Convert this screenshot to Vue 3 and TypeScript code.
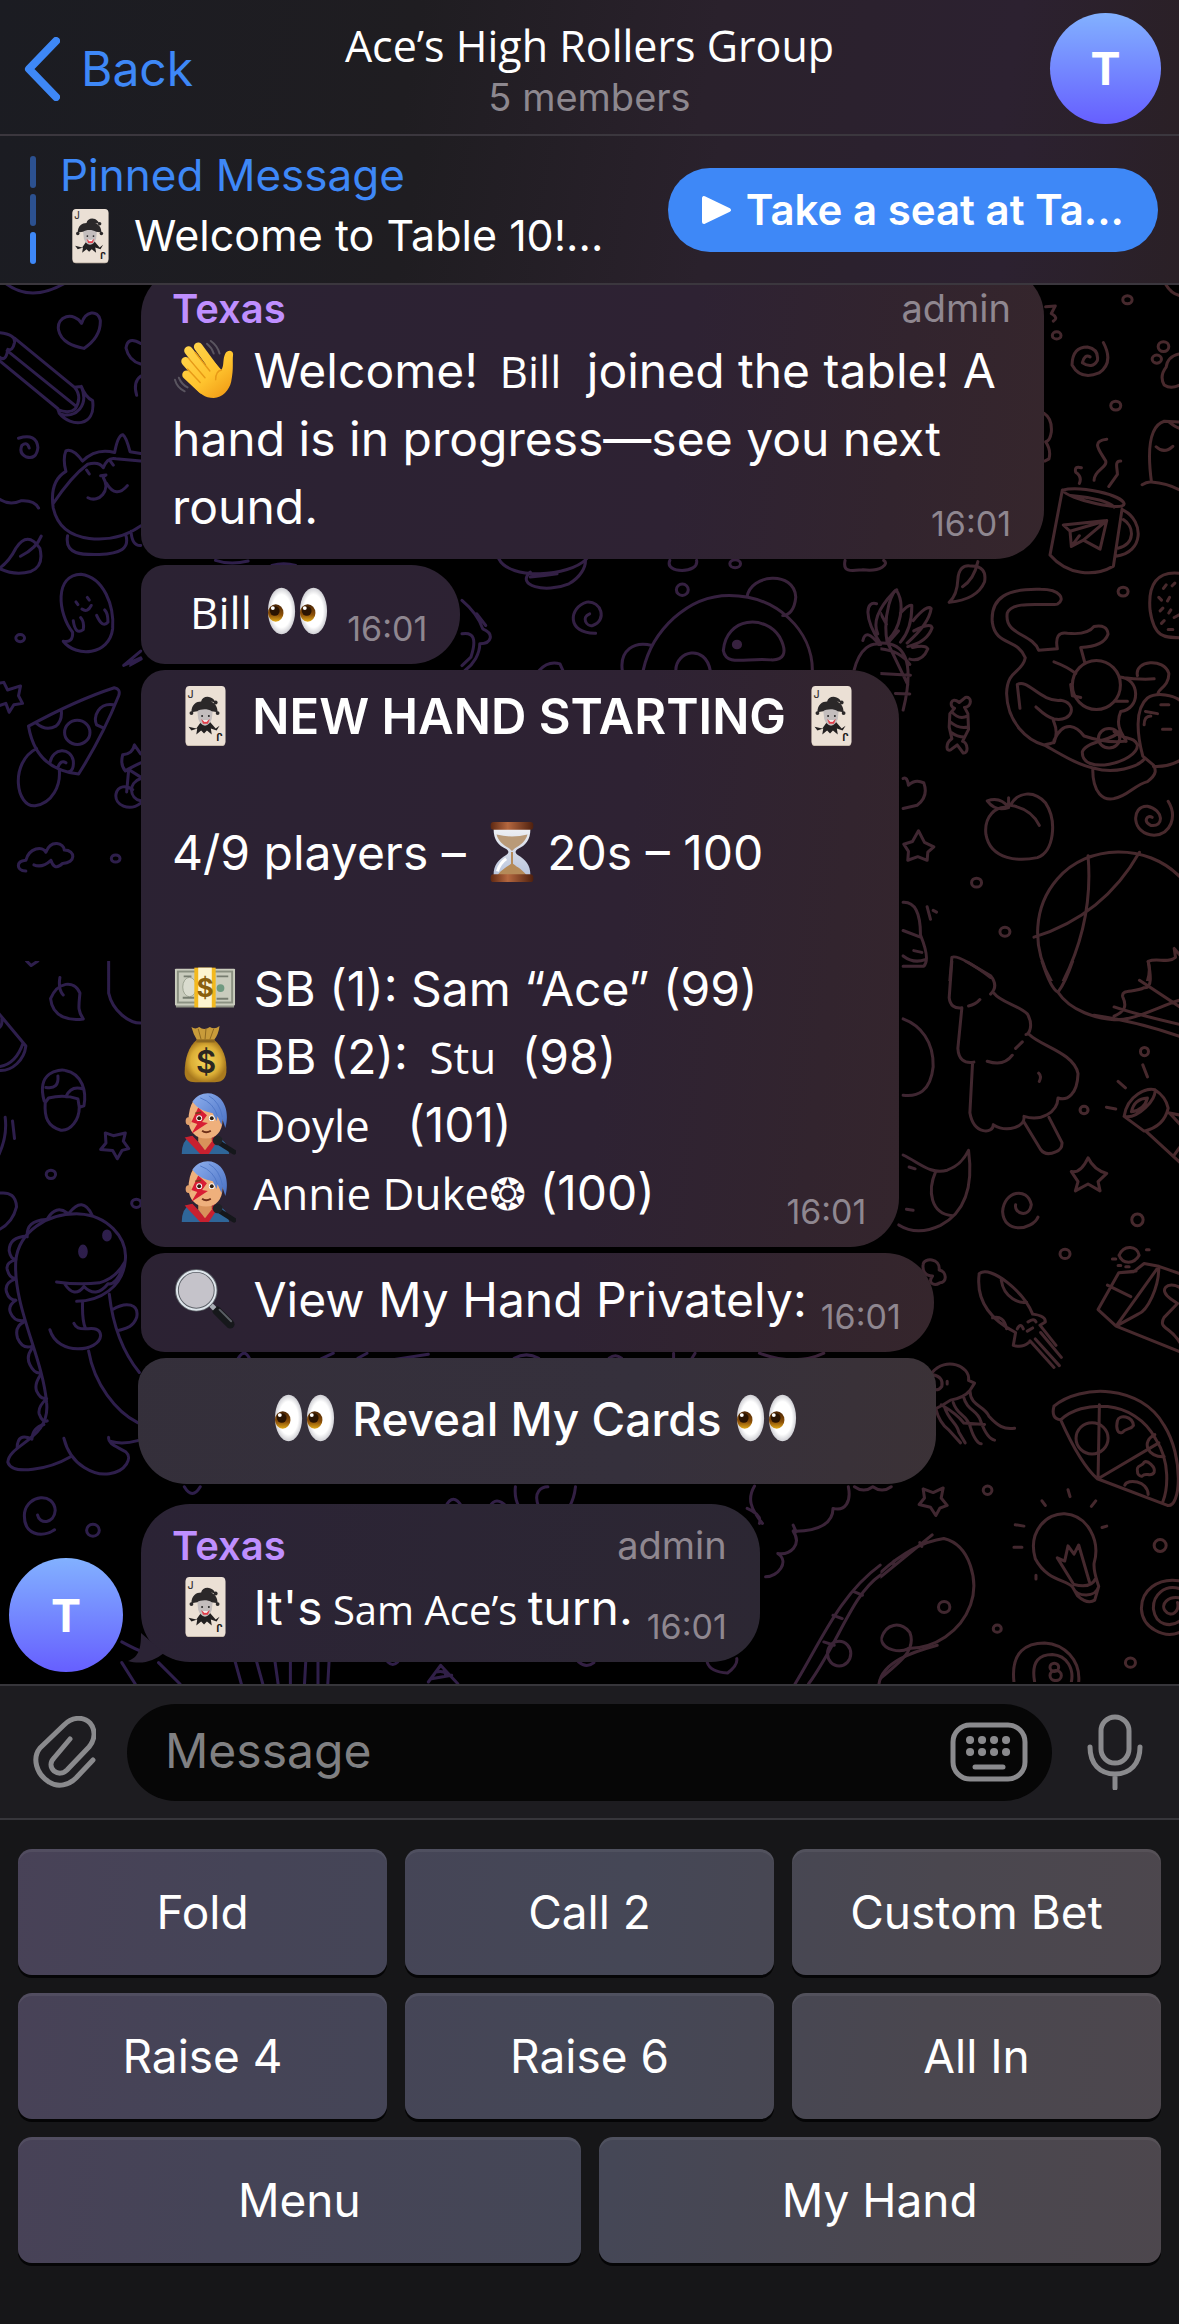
<script setup lang="ts">
import { h, ref, type FunctionalComponent } from 'vue'

type EmojiName = 'joker' | 'wave' | 'eyes' | 'hourglass' | 'cash' | 'bag' | 'singer' | 'magnifier'

const art: Record<EmojiName, string> = {
  joker: `
    <rect x="12" y="2" width="41" height="61" rx="4" fill="#c9bcae" />
    <rect x="12" y="1" width="41" height="61" rx="4" fill="#ebe0d5" />
    <text x="14" y="13" font-size="11" font-weight="500" fill="#3a3636">J</text>
    <text x="14" y="13" font-size="11" font-weight="700" fill="#1e1b1b" transform="rotate(180 32 31.5)">J</text>
    <path d="M23 45l5-7h9l6 7 4-3-3 5-6-2 1 6-5-4-3 3-3-3-5 4 1-6-6 2-3-4z" fill="#232021" />
    <path d="M24 26q8-5 16 0l-1 9q-2 6-7 7-5-1-7-7z" fill="#c3bdbd" />
    <path d="M18 28c0-8 5-11 10-11 1-5 8-7 13-2l2 3-5-1c5 2 7 6 7 11l-6-1c-5-3-12-2-15 0z" fill="#2b2829" />
    <circle cx="18" cy="29" r="2" fill="#2b2829" />
    <circle cx="45" cy="29" r="2" fill="#2b2829" />
    <circle cx="43" cy="18" r="2" fill="#2b2829" />
    <circle cx="29" cy="32" r="1" fill="#222" />
    <circle cx="36" cy="32" r="1" fill="#222" />
    <path d="M28 35q4 5 9 0l-2 5h-5z" fill="#e23e4a" />
    <path d="M30 36q3 1 5 0l-1 2h-3z" fill="#fff" />`,
  wave: `
    <g fill="none" stroke="url(#g-hand)" stroke-width="9" stroke-linecap="round">
      <path d="M25 8l19 26" /><path d="M15 12l21 27" /><path d="M12 23l19 22" /><path d="M13 37l16 15" />
    </g>
    <path d="M27 30L40 22l9 10c3-5 1-11 4-17 2-4 8-4 8 1-1 9 1 13-2 28-2 9-9 16-18 17-9 0-15-5-21-13z" fill="url(#g-hand)" />
    <path d="M22 14l15 19M15 20l17 20M14 31l13 14M49 32q-6 1-6 10" fill="none" stroke="#e89a17" stroke-width="1.5" stroke-linecap="round" />
    <path d="M38 2q7 5 9 13M34 5q5 4 7 10M5 40q3 7 9 10M1 42q2 8 10 12" fill="none" stroke="#5a5560" stroke-width="2" stroke-linecap="round" />`,
  eyes: `
    <ellipse cx="15" cy="32" rx="14" ry="24" fill="url(#g-eye)" />
    <ellipse cx="48" cy="32" rx="14" ry="24" fill="url(#g-eye)" />
    <ellipse cx="9" cy="34" rx="8" ry="9" fill="url(#g-iris)" />
    <ellipse cx="42" cy="34" rx="8" ry="9" fill="url(#g-iris)" />
    <circle cx="8" cy="32" r="5" fill="#2a1402" />
    <circle cx="41" cy="32" r="5" fill="#2a1402" />
    <circle cx="6" cy="29" r="2" fill="#fff" />
    <circle cx="39" cy="29" r="2" fill="#fff" />`,
  hourglass: `
    <path d="M13 8h38c0 12-5 17-13 21-3 2-3 4 0 6 8 5 13 10 13 21H13c0-11 5-16 13-21 3-2 3-4 0-6C18 25 13 20 13 8z" fill="url(#g-glass)" />
    <path d="M16 14q16 4 32 0c-2 7-7 11-13 14l-3 3-3-3c-6-3-11-7-13-14z" fill="#b99a78" />
    <path d="M31 32h2v12c5 4 10 6 14 12H17c4-6 9-8 14-12z" fill="#b58a58" />
    <path d="M17 52q2-8 9-13" stroke="#fff" stroke-width="3" fill="none" />
    <rect x="10" y="1" width="44" height="8" rx="3" fill="url(#g-wood)" />
    <rect x="10" y="55" width="44" height="8" rx="3" fill="url(#g-wood)" />`,
  cash: `
    <path d="M2 48h60v4H2z" fill="#8d9084" />
    <rect x="1" y="12" width="62" height="38" rx="1" fill="#c9ccbd" />
    <rect x="4" y="15" width="56" height="32" fill="none" stroke="#8b9182" stroke-width="2" />
    <ellipse cx="16" cy="31" rx="7" ry="10" fill="#dadccf" stroke="#9da392" stroke-width="1" />
    <circle cx="48" cy="32" r="4" fill="#6f9a80" />
    <path d="M10 20h8M44 20h12M9 42h12M44 43h12" stroke="#777d70" stroke-width="2" />
    <rect x="21" y="11" width="22" height="41" fill="#f3b91f" />
    <rect x="25" y="11" width="14" height="41" fill="#fdf4d0" />
    <text x="32" y="41" text-anchor="middle" font-size="27" font-weight="700" fill="#8a5f0c">$</text>`,
  bag: `
    <path d="M18 2q4 3 8 0 5 4 11 0 5 3 10-1-1 9-6 15H24Q20 10 18 2z" fill="#c89b3a" />
    <path d="M25 4l3 11M33 4l-1 11M41 4l-4 11" stroke="#8c6720" stroke-width="1" />
    <path d="M24 15h17c10 8 14 20 13 34-1 8-6 10-12 10H22c-7 0-11-3-11-10 0-14 4-27 13-34z" fill="url(#g-bag)" />
    <path d="M23 15h19v3H23z" fill="#8c6720" />
    <text x="33" y="50" text-anchor="middle" font-size="32" font-weight="600" fill="#2c2722">$</text>`,
  singer: `
    <path d="M8 63q0-14 9-18l15 11 12-11q11 4 13 18z" fill="#2f6699" />
    <path d="M11 46l8-2 13 14 9-14 6 2-11 17h-9z" fill="#c8202f" />
    <path d="M25 42h14v8l-7 9-7-9z" fill="#d9925a" />
    <path d="M20 8q-5 8-5 20c0 12 8 19 18 19s17-7 17-19L46 8z" fill="#efb07c" />
    <ellipse cx="15" cy="29" rx="3" ry="4" fill="#e0a06c" />
    <path d="M25 15l9 8-5 7 6 1-17 11 6-10-6-2z" fill="#d81e34" />
    <circle cx="26" cy="26" r="3" fill="#fff" />
    <circle cx="26" cy="26" r="2" fill="#332010" />
    <circle cx="39" cy="26" r="3" fill="#fff" />
    <circle cx="39" cy="26" r="2" fill="#332010" />
    <path d="M22 21l6-1" stroke="#7a3b1c" stroke-width="2" />
    <path d="M29 39q4 3 9 0" stroke="#6e2f18" stroke-width="2" fill="none" />
    <path d="M19 9C26-2 41-2 48 6c7 8 8 19 5 30l-3-9-1 6-4-9-1 5-4-8C32 19 24 16 19 9z" fill="url(#g-hair)" />
    <path d="M27 5q14 5 18 19M36 3q11 6 14 22" stroke="#5078c8" stroke-width="1" fill="none" />
    <path d="M46 51l16 10" stroke="#15171b" stroke-width="5" stroke-linecap="round" />
    <circle cx="45" cy="49" r="5" fill="#1f2226" />`,
  magnifier: `
    <path d="M44 44l14 14" stroke="#16181b" stroke-width="9" stroke-linecap="round" />
    <path d="M47 43l12 12" stroke="#5a5e64" stroke-width="2" stroke-linecap="round" />
    <path d="M37 37l5 5" stroke="#a8adb4" stroke-width="5" />
    <circle cx="23" cy="23" r="20" fill="#c5c3ca" stroke="#5d6168" stroke-width="4" />
    <circle cx="23" cy="23" r="20" fill="none" stroke="#dfe6ec" stroke-width="2" />`,
}

const Emoji: FunctionalComponent<{ name: EmojiName }> = (props) =>
  h('svg', { class: 'emoji', viewBox: '0 0 64 64', innerHTML: art[props.name] })
Emoji.props = ['name']

const draft = ref('')

const keyRows: string[][] = [
  ['Fold', 'Call 2', 'Custom Bet'],
  ['Raise 4', 'Raise 6', 'All In'],
  ['Menu', 'My Hand'],
]
</script>

<template>
  <div class="app">
    <svg class="gradients" aria-hidden="true">
      <defs>
        <linearGradient id="g-hand" gradientUnits="userSpaceOnUse" x1="10" y1="5" x2="55" y2="60">
          <stop offset="0" stop-color="#ffd54e" />
          <stop offset="0.6" stop-color="#ffc42e" />
          <stop offset="1" stop-color="#f09a15" />
        </linearGradient>
        <radialGradient id="g-eye">
          <stop offset="0.7" stop-color="#ffffff" />
          <stop offset="1" stop-color="#cfcfd4" />
        </radialGradient>
        <linearGradient id="g-iris" x1="0" y1="0" x2="0" y2="1">
          <stop offset="0" stop-color="#4a2405" />
          <stop offset="0.6" stop-color="#8a4f08" />
          <stop offset="1" stop-color="#e0a818" />
        </linearGradient>
        <linearGradient id="g-wood" x1="0" y1="0" x2="1" y2="0">
          <stop offset="0" stop-color="#5e2812" />
          <stop offset="0.4" stop-color="#b4673f" />
          <stop offset="1" stop-color="#4e200e" />
        </linearGradient>
        <linearGradient id="g-glass" x1="0" y1="0" x2="0" y2="1">
          <stop offset="0" stop-color="#eef0f4" />
          <stop offset="1" stop-color="#b9c4dc" />
        </linearGradient>
        <radialGradient id="g-bag">
          <stop offset="0" stop-color="#f6d75c" />
          <stop offset="0.7" stop-color="#dcae36" />
          <stop offset="1" stop-color="#a97a1e" />
        </radialGradient>
        <linearGradient id="g-hair" x1="0" y1="0" x2="1" y2="1">
          <stop offset="0" stop-color="#8fb0ee" />
          <stop offset="1" stop-color="#4870c4" />
        </linearGradient>
      </defs>
    </svg>

    <header class="topbar">
      <a class="back" href="#">
        <svg class="chevron" viewBox="0 0 36 64" aria-hidden="true"><path d="M32 4L5 32l27 28" /></svg>
        <span>Back</span>
      </a>
      <div class="heading">
        <h1>Ace’s High Rollers Group</h1>
        <p>5 members</p>
      </div>
      <div class="avatar">T</div>
    </header>

    <section class="pinned">
      <div class="marks"><i></i><i></i><i class="on"></i></div>
      <div class="pinned-text">
        <strong>Pinned Message</strong>
        <p><Emoji name="joker" /> Welcome to Table 10!...</p>
      </div>
      <button class="seat" type="button">
        <svg viewBox="0 0 32 32" aria-hidden="true"><path d="M4 4v24l25-12z" /></svg>
        <span>Take a seat at Ta...</span>
      </button>
    </section>

    <main class="chat">
      <svg class="wallpaper" viewBox="0 285 1179 1397" preserveAspectRatio="xMidYMin slice" aria-hidden="true">
        <defs>
          <linearGradient id="g-ink" x1="0" y1="0" x2="1" y2="0">
            <stop offset="0" stop-color="#2d1e4c" />
            <stop offset="0.3" stop-color="#2f1f4a" />
            <stop offset="0.6" stop-color="#352040" />
            <stop offset="0.8" stop-color="#40272f" />
            <stop offset="1" stop-color="#48292c" />
          </linearGradient>
          <mask id="m-ink" maskUnits="userSpaceOnUse" x="0" y="285" width="1179" height="1397">
            <g class="ink">
              <svg x="0" y="280" width="150" height="700" viewBox="0 0 450 1568" preserveAspectRatio="none">
                <path d="M20 8Q95 50 195 8M247 97C225 70 170 80 178 112 185 140 225 148 254 153 280 140 305 120 303 90 295 65 258 70 247 97z" />
                <path d="M0 118Q50 122 46 140 40 160 26 155 20 185 0 172M46 130L226 240 246 238Q258 262 280 270C290 330 215 330 180 298L176 288 0 180M24 158L230 282M226 240Q250 262 228 288 210 300 176 290M246 238C270 280 230 310 185 300" />
                <path d="M58 354Q112 342 116 375 112 402 82 396 58 388 68 370 84 360 90 376M0 490Q30 505 65 494 105 492 118 510" />
                <path d="M0 645Q30 630 50 600 85 560 122 600 135 640 95 652 45 662 0 645M64 618Q112 600 126 573" />
                <path d="M424 142Q385 125 380 152 388 180 424 188M424 215Q400 228 412 258" />
                <path d="M424 388L392 384Q380 350 370 346 355 348 346 386 290 375 250 405 220 375 200 382 190 400 200 428 150 450 162 510 180 570 270 578 360 585 424 550M162 500Q215 440 265 412 300 405 312 420 325 395 350 400L424 405M205 572C195 615 250 615 300 614 365 612 390 600 380 572M395 562Q398 595 424 594M262 425L270 434M332 404L342 414M304 438L320 436Q312 440 312 442C335 470 300 500 266 487M322 455Q350 490 384 460" />
                <path d="M192 808Q222 812 220 788C175 745 165 660 245 658 315 665 345 730 340 780 330 840 230 845 192 808M222 762Q228 795 252 782 256 765 244 755M292 750Q310 780 326 765 326 745 316 738M230 720L236 726M264 710L270 716M248 736Q265 745 276 728M373 862L424 830M373 862L424 845" />
                <ellipse cx="63" cy="801" rx="13" ry="8" /><ellipse cx="349" cy="1294" rx="13" ry="8" />
                <path d="M0 902L14 900 25 917 64 908 58 930 70 947 44 950 30 967 20 947 0 952" />
                <path d="M88 998Q230 940 345 912 365 915 358 930 310 1020 238 1105 110 1095 88 998M112 992Q140 1010 170 998 190 985 186 962M342 950C300 945 280 975 292 995L312 1002M152 1080C160 1045 215 1045 222 1075Q225 1098 208 1100M176 1090Q185 1072 200 1080M112 1048C30 1080 50 1180 108 1176 160 1170 185 1130 180 1095" />
                <ellipse cx="234" cy="1012" rx="38" ry="27" />
                <path d="M424 1060L405 1040Q400 1060 370 1062 362 1085 378 1098 395 1090 424 1080M388 1095L424 1112M388 1095L382 1145M424 1115C385 1125 390 1160 424 1165M424 1170C390 1190 345 1175 350 1150 355 1130 382 1130 400 1140" />
                <path d="M80 1322C50 1320 50 1300 80 1298 90 1270 130 1265 140 1280 155 1250 195 1260 195 1275 230 1275 230 1305 190 1305 170 1320 160 1310 155 1298 130 1315 110 1310 104 1308 95 1325 80 1322M80 1322L30 1460 98 1535 284 1390Q265 1335 222 1300M30 1460L175 1318M50 1480L240 1328M424 1426C350 1430 325 1470 328 1510V1568M328 1510L348 1495M328 1528L344 1545" />
              </svg>
              <svg x="0" y="960" width="150" height="720" viewBox="0 0 450 1568" preserveAspectRatio="none">
                <path d="M328 0V70C340 110 390 135 424 135M82 0L96 10 116 0M252 126C215 130 160 125 154 82 175 45 225 40 242 70 238 100 235 108 252 126M182 36Q176 62 192 74" />
                <path d="M0 115L80 185C75 215 40 240 0 238M72 178Q50 225 0 230M0 145Q10 140 8 126" />
                <path d="M135 305C110 240 180 235 198 238 250 245 262 285 254 315L240 318C240 345 215 370 185 368 145 360 135 340 138 308L148 298Q195 290 236 300L240 318M140 275Q180 280 176 250M200 295Q215 270 250 278" />
                <path d="M318 374L342 380 378 374 372 392 388 408 368 412 354 430 340 412 304 410 320 396zM18 340Q25 380 0 420M40 348L46 386M0 505Q50 500 52 535 40 570 0 584" />
                <ellipse cx="155" cy="464" rx="14" ry="9" /><ellipse cx="411" cy="527" rx="14" ry="9" /><ellipse cx="281" cy="1238" rx="19" ry="13" />
                <path d="M50 650C60 590 140 548 240 550 320 552 385 600 378 650 372 710 300 740 232 740M172 698Q240 705 300 700 350 690 376 655M196 702Q225 735 254 708 290 735 326 702Q350 705 370 668M50 650C40 750 130 860 142 960 155 1040 30 1050 26 1090 40 1120 150 1105 214 1078M250 742Q248 780 258 798M152 802C175 860 300 850 304 815 302 795 275 800 258 800 240 800 230 798 224 788M330 725C340 790 370 850 420 895M268 848C285 920 350 980 415 1004M340 758C380 740 420 745 412 775 400 800 370 800 356 804M194 1038C215 1100 290 1120 330 1115 380 1110 400 1080 380 1068 350 1055 325 1050 328 1036M335 1045Q370 1052 415 1043" />
                <path d="M84 600Q80 565 140 562M145 560Q170 530 204 548M210 548Q250 510 278 552M84 598Q30 600 30 630 35 650 50 648M50 650Q20 655 24 670 30 690 48 690M48 692Q15 700 22 720 30 738 50 738M50 738Q25 750 34 765 45 785 75 782M75 785Q45 795 55 820 70 845 98 838M98 843Q80 860 92 878 105 898 124 896M124 900Q105 920 112 935 125 955 140 950M142 952Q115 970 120 985 130 1005 144 1000M134 1008Q100 1015 98 1040M98 1040Q55 1025 54 1058" />
                <ellipse cx="251" cy="632" rx="10" ry="12" class="dot" /><ellipse cx="323" cy="597" rx="10" ry="10" class="dot" />
                <path d="M166 1237C130 1255 70 1250 76 1200 85 1160 165 1155 168 1195 165 1225 120 1225 115 1205 116 1195 124 1194M0 1325Q20 1310 46 1325 70 1318 104 1318M0 1335Q20 1350 30 1370M424 1278Q410 1290 404 1325 370 1325 368 1345 380 1360 404 1345 396 1370 424 1372M360 1445L424 1475M375 1490L424 1480M358 1460Q360 1500 380 1530L420 1568M0 1502Q25 1510 24 1525 10 1535 0 1528M120 1540L140 1555 168 1560" />
              </svg>
              <svg x="880" y="280" width="299" height="700" viewBox="0 0 897 1568" preserveAspectRatio="none">
                <ellipse cx="740" cy="44" rx="14" ry="9" /><ellipse cx="528" cy="124" rx="13" ry="8" /><ellipse cx="705" cy="281" rx="15" ry="10" /><ellipse cx="727" cy="697" rx="15" ry="10" /><ellipse cx="288" cy="1348" rx="15" ry="10" /><ellipse cx="373" cy="1458" rx="15" ry="10" />
                <path d="M855 10Q870 30 897 35M495 60L524 58 512 75Q535 85 518 92M668 140Q700 185 655 208 600 225 574 190 575 150 620 150 655 155 650 180 635 200 605 185 612 165 628 172" />
                <ellipse cx="848" cy="149" rx="16" ry="11" /><ellipse cx="828" cy="177" rx="14" ry="9" />
                <path d="M897 165Q860 170 856 195 835 215 850 235 870 245 897 235M490 298Q515 310 512 340 508 360 495 362 512 380 505 400L492 405M784 458Q800 450 812 452 790 330 850 316L897 318M812 452Q860 455 897 470M826 373Q850 390 876 372M865 318Q885 330 897 332" />
                <path d="M545 470C600 460 720 480 730 500 735 520 560 490 545 470L508 615C560 660 640 665 698 640L724 512M570 482Q680 490 700 508M730 516C790 540 790 610 705 618M728 536C760 550 765 590 712 600M548 548L678 538 658 602 608 582 572 596 568 562zM568 562L678 538 608 582M572 596L596 572M678 356C630 360 655 380 675 405 680 420 640 425 640 448M720 405C700 405 710 420 710 435L684 462M602 420Q580 415 585 430 605 440 596 455" />
                <path d="M206 721Q230 705 232 670 235 635 272 640 320 640 312 675 290 715 206 721M246 686Q280 670 292 630M0 745L18 770M20 810C5 745 40 690 48 694 75 725 60 780 22 806M60 745Q85 725 94 728 95 780 60 810M98 762Q140 725 152 735 145 770 80 812M100 785Q150 765 155 778 140 810 82 820M96 822Q135 815 142 825 125 855 88 848M22 812L54 785M0 812C70 810 105 850 68 962M0 825Q60 830 88 860M0 880L90 884M22 812L82 905M45 925L88 926" />
                <path d="M236 945C210 930 205 955 222 958L208 970 206 1000 214 1026C195 1035 195 1058 212 1050L230 1040 248 1058C265 1060 262 1035 246 1032L264 1005 262 970 252 956C275 955 275 930 254 934zM214 966Q235 985 262 975M208 988Q235 1005 262 1000M212 1012Q230 1022 252 1022M68 1115Q80 1110 84 1130 105 1115 130 1125 145 1155 110 1175L68 1182" />
                <path d="M70 1262L96 1256 114 1232 132 1258 160 1268 142 1280 140 1298 112 1290 82 1298 84 1278zM384 1180Q360 1155 320 1165 345 1190 384 1180zM384 1158V1180C345 1175 310 1200 316 1240 330 1300 420 1300 470 1292 520 1280 530 1210 495 1170 460 1140 410 1145 390 1175 430 1180 460 1195 476 1220" />
                <path d="M68 1392Q120 1390 120 1465 150 1520 130 1535H68M68 1455L120 1470M68 1512Q100 1530 134 1520M100 1500L124 1504M140 1402L150 1430M158 1410L168 1414M208 1568L214 1515Q235 1508 330 1560" />
                <path d="M474 828L530 825Q520 785 560 790 620 795 640 775 680 770 682 792 670 820 600 822L612 855M474 828C455 790 370 795 380 745 395 715 500 730 530 725 555 715 540 692 480 692 380 690 330 710 335 765 345 820 410 800 434 845 425 880 380 870 378 925 380 990 440 1030 490 1040 540 1060 590 1085 640 1092 700 1105 770 1090 790 1072M418 958L410 905C440 890 480 945 540 940 590 945 580 990 520 982 490 975 475 960 466 955M520 1035C540 1000 510 985 520 982M490 1040Q530 1035 520 1030C550 980 590 1000 610 1020 650 1030 690 1035 730 1032M520 854Q560 865 585 880M605 1055C620 1030 700 1030 715 1010M605 1055C600 1110 770 1080 770 1040 760 1020 730 1030 700 1010M636 1092C635 1150 670 1165 700 1160 740 1155 760 1130 800 1122 830 1105 825 1095 818 1085L786 1065C770 1020 760 960 800 935 830 920 880 930 897 940M818 1088Q860 1090 897 1075M770 885C760 850 850 845 864 880 865 910 830 915 832 925M716 888Q780 895 820 892M716 888C780 890 780 960 720 965 700 1000 730 1020 736 1032M705 942H740" />
                <ellipse cx="647" cy="906" rx="72" ry="55" /><ellipse cx="685" cy="1025" rx="32" ry="22" />
                <path d="M570 905L575 930 600 934M794 965L830 970M790 995Q790 975 810 975M840 950H864M845 1005H870M862 1166C890 1200 870 1240 820 1242 750 1240 750 1175 800 1177 850 1185 850 1225 810 1220 785 1210 800 1195 814 1202" />
                <path d="M897 656C830 650 800 680 808 740 820 800 850 800 897 800M848 690L856 682M834 710L842 716M874 684L882 678M860 718L866 710M838 740L846 734M864 745L870 738M842 768L850 762M880 755L897 748M862 782H876" />
                <path d="M897 1335C800 1260 620 1260 530 1340 460 1400 450 1490 512 1568M622 1288C635 1400 600 1490 548 1568M776 1280C700 1380 590 1440 460 1470M800 1568Q810 1545 802 1524C830 1515 860 1530 884 1515L880 1495 897 1510" />
              </svg>
              <svg x="880" y="960" width="299" height="720" viewBox="0 0 897 1568" preserveAspectRatio="none">
                <path d="M214 0L206 80Q210 105 244 102M255 0L330 32Q355 55 330 72M264 98Q285 95 298 84M340 70C360 90 410 95 440 115 460 140 445 160 436 160M244 102L232 190Q235 225 280 220M320 218Q370 230 395 205M405 190L425 176M446 160C480 185 580 200 592 245 590 290 560 305 532 298 530 330 480 350 430 338 435 360 380 375 338 356 340 375 280 380 268 330L276 222M430 350L480 410Q495 425 525 415 545 410 544 395L505 340M474 244Q484 250 476 262" />
                <path d="M68 126C120 140 160 175 158 230 150 285 110 296 68 292M68 422C120 440 150 465 200 455 240 445 255 425 264 412 275 470 270 540 180 575 130 592 90 590 55 574M166 457C140 500 150 550 216 554M86 448L104 452M78 540L98 542" />
                <path d="M484 0Q510 60 532 68 555 45 576 0M532 68C570 110 650 125 700 128 760 130 830 100 897 85M700 100Q760 115 897 138M640 118Q760 130 897 164M802 0C810 30 815 60 790 58 760 70 720 60 726 78 740 100 730 110 700 120M776 42L897 100" />
                <ellipse cx="791" cy="197" rx="12" ry="9" /><ellipse cx="610" cy="324" rx="12" ry="8" /><ellipse cx="770" cy="563" rx="17" ry="13" /><ellipse cx="553" cy="637" rx="15" ry="10" /><ellipse cx="321" cy="1151" rx="13" ry="9" /><ellipse cx="838" cy="1271" rx="18" ry="13" /><ellipse cx="191" cy="1405" rx="17" ry="12" /><ellipse cx="350" cy="1452" rx="12" ry="8" /><ellipse cx="749" cy="1526" rx="15" ry="10" />
                <path d="M786 226L800 252M712 262L734 276M677 318L705 322M730 338C740 290 800 275 822 280 830 300 770 345 730 338zM822 280Q855 295 862 320 850 360 790 370L730 338M795 370L897 438M862 330L897 335M868 332L897 355M880 422L897 405M752 328Q760 300 800 298 790 325 752 328" />
                <path d="M572 458Q600 462 622 428 640 455 678 462L652 480 658 500 622 485 584 500 592 480zM472 557C455 585 370 595 366 545 370 500 440 490 452 530 445 560 400 550 405 530 415 525 424 530" />
                <path d="M296 680C330 660 430 720 456 768 480 770 495 775 494 785L478 792M296 680C285 740 330 780 405 808L398 836Q425 842 444 830M362 694C370 735 420 745 438 742M336 776Q370 770 378 800M410 800Q420 785 428 800M440 805L456 798M442 785Q460 775 466 785M478 792L526 836M480 808L542 862M464 822L536 880M448 826L520 884" />
                <path d="M715 640C730 615 770 620 775 640 760 660 725 660 715 640M714 678L652 758 706 794 772 768C800 760 835 710 834 664L790 658 758 676zM714 678L766 674M680 705L750 730M706 794L834 664M897 680L834 664M706 794L897 850M897 710C860 695 830 715 870 735L890 745 850 775C830 800 870 795 897 830M695 648H705M712 662H720M735 665H745M797 628H805" />
                <path d="M155 895C195 860 270 880 264 912L282 918 268 934Q250 950 210 955 190 965 162 975M158 900Q190 905 184 925 175 935 158 932M200 914V920M268 934C270 970 310 965 325 990 350 1010 370 1020 402 1016M248 946C260 980 290 975 300 1000 310 1020 325 1040 342 1042M218 960C230 990 260 985 270 1015 280 1040 295 1050 302 1050M192 970C205 1000 230 1005 235 1025L254 1048M165 972C175 1000 195 1015 205 1020L240 1048M182 965Q230 985 250 1005L312 1008" />
                <path d="M520 968C600 920 780 920 850 1010 910 1080 900 1190 860 1184L650 1126Q600 1095 540 998 510 995 520 968M540 998C600 955 760 950 825 1040 870 1090 860 1150 846 1176M656 965L652 1126 834 1048M822 1030C780 1045 800 1080 850 1078M732 1140C740 1125 800 1130 802 1160" />
                <ellipse cx="634" cy="1038" rx="48" ry="34" />
                <path d="M710 1000C715 985 755 990 758 1010 750 1020 735 1015 725 1025 710 1030 705 1015 710 1000zM770 1110C765 1095 785 1100 790 1090 800 1085 825 1100 820 1112 810 1125 795 1110 785 1120 775 1122 770 1115 770 1110z" />
                <path d="M116 1182L132 1168 128 1148 158 1156 188 1146 182 1168 200 1184 178 1190 166 1206 150 1188zM0 1340L155 1248M0 1330Q100 1265 190 1256M40 1305V1315M118 1265L124 1273M190 1256C270 1270 295 1350 270 1400 240 1460 160 1495 84 1495" />
                <path d="M84 1495C60 1505 10 1500 2 1475 15 1440 60 1435 88 1460 110 1500 50 1530 0 1560" />
                <path d="M576 1362C560 1345 500 1350 464 1300 440 1240 500 1200 552 1202 620 1205 660 1260 640 1310 638 1330 650 1350 654 1360 645 1385 590 1385 576 1362zM576 1362L590 1380Q620 1400 642 1390L654 1360M580 1356Q630 1365 644 1344M576 1352L530 1298 552 1305 562 1272 580 1290 594 1270 626 1350M562 1150L568 1165M484 1174L494 1184M645 1174L632 1186M404 1226L430 1229M664 1232L678 1229M400 1275H424M466 1336V1344" />
                <path d="M897 1348C830 1340 780 1370 782 1410 785 1450 850 1475 897 1460M897 1365C850 1355 815 1380 818 1410 825 1445 870 1450 897 1435M897 1385C860 1380 840 1400 852 1412 870 1430 897 1415 890 1395" />
                <path d="M400 1568C390 1500 440 1483 492 1483 550 1485 600 1520 594 1568M462 1568C450 1520 480 1508 515 1508 560 1510 580 1540 572 1568" />
                <ellipse cx="521" cy="1536" rx="13" ry="9" /><ellipse cx="525" cy="1554" rx="17" ry="11" />
                <path d="M128 660C130 645 180 645 176 672 200 675 200 700 178 700 160 708 140 700 156 685 135 685 125 675 128 660z" />
              </svg>
              <svg x="130" y="280" width="930" height="390" viewBox="0 0 1568 1170" preserveAspectRatio="none">
                <path d="M622 835C640 900 740 890 770 835M675 875C650 915 700 940 740 910 760 890 768 860 768 840M675 890Q700 885 720 880M910 840C900 880 960 880 955 840M1205 840C1200 880 1220 870 1235 868 1265 875 1280 850 1270 840" />
                <ellipse cx="1020" cy="850" rx="9" ry="12" /><ellipse cx="931" cy="928" rx="10" ry="17" />
                <path d="M775 1000C760 1010 770 1040 780 1035 805 1020 795 960 770 965 740 980 735 1060 785 1058" />
                <path d="M865 1170C880 1050 940 945 1010 945 1090 945 1150 1050 1150 1170M1040 950C1045 880 1120 870 1122 950 1120 990 1110 1005 1100 1005M830 1170C825 1110 850 1080 880 1095M920 1170C920 1110 970 1090 978 1170M1000 1110C1005 1010 1070 1000 1095 1070 1110 1120 1100 1140 1080 1138 1040 1130 1005 1160 1000 1110" />
                <ellipse cx="1023" cy="1092" rx="6" ry="10" class="dot" />
                <path d="M560 960C580 990 590 1020 595 1045 615 1060 610 1090 590 1090 590 1120 580 1150 565 1170M560 1060Q590 1050 575 1130L560 1155M585 1000L600 1035M690 1170Q705 1140 725 1150L730 1170" />
                <path d="M0 1155L20 1135M145 840Q170 855 200 842M240 855Q260 845 280 855" />
                <path d="M1265 1090C1235 1010 1240 960 1258 970M1260 1060C1245 1000 1290 930 1292 928M1235 1080Q1240 1040 1262 1092M1220 1170C1230 1100 1250 1085 1265 1092" />
              </svg>
              <svg x="0" y="1240" width="960" height="450" viewBox="0 0 1568 1350" preserveAspectRatio="none">
                <path d="M390 350Q400 320 408 350M525 352L545 335M585 350L600 335M640 355L700 338M840 350Q860 330 880 350M995 350Q1005 335 1015 350M1100 350V335M1130 350L1135 335M1240 335Q1300 375 1345 335M302 735Q315 775 328 735M728 795Q740 750 755 795M800 795Q810 760 828 795M842 735Q840 770 848 795M940 735Q938 770 930 795M880 795C870 750 885 735 895 735" />
                <path d="M1232 733C1220 770 1225 800 1245 845M1385 735C1390 780 1380 810 1360 800 1360 840 1340 870 1295 868 1310 910 1290 940 1270 935 1290 960 1270 1005 1250 1005M1220 800Q1245 820 1240 845M1295 850L1300 870M1395 735Q1410 755 1425 735 1440 755 1455 735" />
                <path d="M1298 1326C1340 1200 1370 1060 1437 970M1320 1326C1370 1200 1390 1060 1437 1000M1435 1326C1440 1260 1490 1230 1530 1210M1345 1200L1362 1210M1395 1050L1408 1060M1360 1120L1375 1130" />
                <ellipse cx="1370" cy="1235" rx="19" ry="37" />
                <path d="M1155 1262Q1160 1290 1188 1293 1205 1270 1203 1250M945 1260Q958 1280 970 1262M634 1260Q642 1275 650 1260M700 1320L720 1270 748 1325M705 1310L738 1300M712 1290Q730 1285 728 1300M385 1260L395 1326M420 1260L430 1326M450 1260L455 1326M475 1260V1326M500 1260L498 1326M520 1260V1326M538 1260L536 1326M200 1262L222 1326M260 1262L295 1326M200 1200Q225 1225 235 1230" />
              </svg>
            </g>
          </mask>
        </defs>
        <rect x="0" y="285" width="1179" height="1397" fill="url(#g-ink)" mask="url(#m-ink)" />
      </svg>

      <div class="stack">
        <article class="bubble wide">
          <div class="sender"><b>Texas</b><span>admin</span></div>
          <div class="line"><Emoji name="wave" /> Welcome! <span class="name spaced">Bill</span> joined the table! A</div>
          <div class="line">hand is in progress—see you next</div>
          <div class="line last"><span>round.</span><time>16:01</time></div>
        </article>

        <article class="bubble">
          <div class="line last">
            <span><span class="name indent">Bill</span> <Emoji name="eyes" /></span><time>16:01</time>
          </div>
        </article>

        <article class="bubble">
          <div class="line title"><Emoji name="joker" /> NEW HAND STARTING <Emoji name="joker" /></div>
          <div class="line"></div>
          <div class="line">4/9 players – <Emoji name="hourglass" />20s – 100</div>
          <div class="line"></div>
          <div class="line"><Emoji name="cash" /> SB (1): Sam “Ace” (99)</div>
          <div class="line"><Emoji name="bag" /> BB (2): <span class="name spaced">Stu</span> (98)</div>
          <div class="line"><Emoji name="singer" /> <span class="name trail">Doyle</span> (101)</div>
          <div class="line last">
            <span><Emoji name="singer" /> <span class="name">Annie Duke<span class="badge">❂</span></span> (100)</span><time>16:01</time>
          </div>
        </article>

        <div class="offer">
          <article class="bubble">
            <div class="line last">
              <span><Emoji name="magnifier" /> View My Hand Privately:</span><time>16:01</time>
            </div>
          </article>
          <button class="reveal" type="button">
            <Emoji name="eyes" /> Reveal My Cards <Emoji name="eyes" />
          </button>
        </div>
      </div>

      <div class="turn">
        <div class="avatar big">T</div>
        <article class="bubble tailed">
          <svg class="tail" viewBox="0 0 36 30" aria-hidden="true"><path d="M13 0c0 16-2 24-13 28 14 4 26 0 36-8z" /></svg>
          <div class="sender"><b>Texas</b><span>admin</span></div>
          <div class="line last">
            <span><Emoji name="joker" /> It's<span class="name small"> Sam Ace’s </span>turn.</span><time>16:01</time>
          </div>
        </article>
      </div>
    </main>

    <form class="compose" @submit.prevent>
      <button class="icon" type="button" aria-label="Attach">
        <svg viewBox="0 0 64 72"><path d="M61 44L44 62C37 69 26 72 17 66 4 58 0 42 8 32L32 9c8-8 19-9 26-2 6 7 5 17-1 24L35 54c-4 4-9 4-13 1-4-4-4-9 0-13l16-19" /></svg>
      </button>
      <div class="field">
        <input v-model="draft" type="text" placeholder="Message" aria-label="Message" />
        <button class="icon" type="button" aria-label="Bot keyboard">
          <svg class="kb" viewBox="0 0 78 60">
            <rect x="3" y="3" width="72" height="54" rx="17" />
            <path class="dots" d="M20 18h.1M32 18h.1M44 18h.1M56 18h.1M20 30h.1M32 30h.1M44 30h.1M56 30h.1" />
            <path d="M25 45h28" />
          </svg>
        </button>
      </div>
      <button class="icon" type="button" aria-label="Record voice">
        <svg class="mic" viewBox="0 0 56 76">
          <rect x="14" y="3" width="28" height="46" rx="14" />
          <path d="M3 33c0 17 10 27 25 27s25-10 25-27M28 60v14" />
        </svg>
      </button>
    </form>

    <section class="keyboard">
      <div v-for="(row, i) in keyRows" :key="i" class="key-row">
        <button v-for="label in row" :key="label" class="key" type="button">{{ label }}</button>
      </div>
    </section>
  </div>
</template>

<style>
html,
body {
  background: #161618;
}
</style>

<style scoped>
.app {
  display: flex;
  flex-direction: column;
  min-height: 100vh;
  background: #161618;
  color: #fff;
  font-family: Inter, 'Liberation Sans', sans-serif;
  font-size: 48px;
}

.gradients {
  position: absolute;
  width: 0;
  height: 0;
}

button,
input {
  font: inherit;
  color: inherit;
  border: 0;
  margin: 0;
  padding: 0;
  background: none;
}

.topbar,
.pinned {
  display: flex;
  align-items: center;
  box-sizing: border-box;
  border-bottom: 2px solid #3b373e;
  background: linear-gradient(100deg, #1b1c22 0%, #1f1d21 35%, #2a212c 60%, #2c2130 85%, #2a2026 100%);
}

.topbar {
  display: grid;
  grid-template-columns: 1fr auto 1fr;
  height: 136px;
  padding: 3px 18px 0;
}

.back {
  display: flex;
  align-items: center;
  gap: 21px;
  padding-left: 6px;
  color: #3e88f7;
  text-decoration: none;
}

.chevron {
  width: 36px;
  height: 64px;
  fill: none;
  stroke: #3e88f7;
  stroke-width: 8;
  stroke-linecap: round;
  stroke-linejoin: round;
}

.heading {
  text-align: center;
}

h1 {
  margin: 0;
  font-family: 'Open Sans', 'Noto Sans', sans-serif;
  font-size: 43px;
  font-weight: 400;
  line-height: 56px;
}

.heading p {
  margin: 0;
  color: #8d888f;
  font-size: 38px;
  line-height: 46px;
}

.avatar {
  display: flex;
  align-items: center;
  justify-content: center;
  flex: none;
  justify-self: end;
  width: 111px;
  height: 111px;
  border-radius: 50%;
  background: linear-gradient(#82b1ff, #665fff);
  font-size: 45px;
  font-weight: 700;
}

.avatar.big {
  width: 114px;
  height: 114px;
  margin-bottom: -10px;
}

.pinned {
  height: 149px;
  padding: 0 21px 0 30px;
}

.marks {
  display: flex;
  flex-direction: column;
  gap: 6px;
}

.marks i {
  width: 6px;
  height: 32px;
  border-radius: 3px;
  background: #2c5190;
}

.marks i.on {
  background: #3e88f7;
}

.pinned-text {
  flex: 1;
  padding: 0 0 10px 24px;
  font-size: 44px;
  line-height: 60px;
  white-space: nowrap;
}

.pinned-text strong {
  display: block;
  color: #3e88f7;
  font-weight: 400;
}

.pinned-text p {
  margin: 0;
  font-size: 43px;
}

.pinned-text .emoji {
  width: 56px;
  height: 56px;
}

.seat {
  display: flex;
  align-items: center;
  gap: 14px;
  height: 84px;
  padding: 0 34px 0 32px;
  border-radius: 42px;
  background: #3e88f7;
  font-size: 42px;
  font-weight: 600;
  white-space: nowrap;
}

.seat svg {
  width: 32px;
  height: 32px;
  fill: #fff;
  stroke: #fff;
  stroke-width: 4;
  stroke-linejoin: round;
}

.emoji {
  width: 62px;
  height: 62px;
  margin: 0 4px 0 2px;
  vertical-align: -13px;
}

.chat {
  position: relative;
  flex: 1;
  overflow: hidden;
  padding: 0 9px 22px;
  background: #000;
}

.wallpaper {
  position: absolute;
  inset: 0;
  width: 100%;
  height: 100%;
}

.ink {
  fill: none;
  stroke: #fff;
}

.ink path,
.ink ellipse {
  stroke-width: 3px;
  vector-effect: non-scaling-stroke;
  stroke-linecap: round;
  stroke-linejoin: round;
}

.ink .dot {
  fill: #fff;
}

.stack {
  position: relative;
  display: flex;
  flex-direction: column;
  align-items: flex-start;
  gap: 6px;
  margin: -18px 0 0 132px;
}

.bubble {
  position: relative;
  box-sizing: border-box;
  padding: 13px 33px 18px 31px;
  border-radius: 24px 49px 49px 24px;
  background: linear-gradient(97deg, #2b2233 15%, #2e2233 50%, #32242e 65%, #3a2829 90%) fixed;
}

.bubble.wide {
  width: 100%;
  max-width: 903px;
  border-top-left-radius: 49px;
}

.sender {
  display: flex;
  justify-content: space-between;
  line-height: 57px;
  font-size: 40px;
}

.sender b {
  color: #bf8fff;
  font-weight: 600;
}

.sender span,
time {
  color: #8f8790;
}

.sender span {
  font-size: 38px;
}

.line {
  min-height: 68px;
  line-height: 68px;
  white-space: nowrap;
}

.line.title {
  font-size: 49px;
  font-weight: 600;
}

.line.last {
  display: flex;
  align-items: flex-end;
  justify-content: space-between;
}

time {
  padding-left: 14px;
  font-size: 34px;
  line-height: 34px;
}

.name {
  font-family: 'Open Sans', 'Noto Sans', sans-serif;
  font-size: 44px;
}

.name.spaced {
  padding: 0 12px 0 8px;
}

.name.indent {
  padding-left: 18px;
}

.name.trail {
  padding-right: 24px;
}

.name.small {
  font-size: 40px;
}

.badge {
  font-family: 'DejaVu Sans', sans-serif;
}

.offer {
  display: flex;
  flex-direction: column;
  gap: 6px;
}

.reveal {
  height: 126px;
  margin: 0 -2px 0 -3px;
  padding-bottom: 6px;
  border-radius: 28px 28px 49px 49px;
  background: linear-gradient(97deg, #342f3a 15%, #35303c 55%, #3d3234 85%) fixed;
  font-size: 46px;
  font-weight: 500;
  white-space: nowrap;
}

.turn {
  position: relative;
  display: flex;
  align-items: flex-end;
  gap: 18px;
  margin-top: 20px;
}

.tailed {
  border-radius: 49px;
  background: linear-gradient(97deg, #2b2335, #2c2733);
}

.tail {
  position: absolute;
  left: -13px;
  bottom: -1px;
  width: 36px;
  height: 30px;
  fill: #2b2335;
}

.compose {
  display: flex;
  align-items: center;
  justify-content: space-between;
  box-sizing: border-box;
  height: 136px;
  padding: 0 36px 0 32px;
  border-top: 2px solid #37363b;
  border-bottom: 2px solid #37363b;
  background: #1d1c20;
}

.icon {
  display: flex;
}

.icon svg {
  width: 64px;
  height: 72px;
  fill: none;
  stroke: #8a8a8d;
  stroke-width: 5;
  stroke-linecap: round;
  stroke-linejoin: round;
}

.icon .mic {
  width: 56px;
  height: 76px;
}

.icon .kb {
  width: 78px;
  height: 60px;
}

.icon .dots {
  stroke-width: 8;
}

.field {
  display: flex;
  align-items: center;
  flex: 1;
  height: 97px;
  margin: 0 35px 0 31px;
  padding: 0 24px 0 38px;
  border-radius: 49px;
  background: #060606;
}

.field input {
  flex: 1;
  min-width: 0;
  padding-bottom: 4px;
  outline: none;
}

.field input::placeholder {
  color: #808082;
  opacity: 1;
}

.keyboard {
  display: flex;
  flex-direction: column;
  gap: 18px;
  padding: 29px 18px 63px;
}

.key-row {
  display: flex;
  gap: 18px;
}

.key {
  flex: 1 1 0;
  height: 126px;
  border-radius: 14px;
  background: linear-gradient(95deg, #4a4057 0%, #454457 30%, #454756 58%, #4a474f 80%, #4d474d 100%) fixed;
  box-shadow: inset 0 3px 0 rgba(255, 255, 255, 0.06), 0 3px 0 #050506;
  font-size: 46px;
}
</style>
